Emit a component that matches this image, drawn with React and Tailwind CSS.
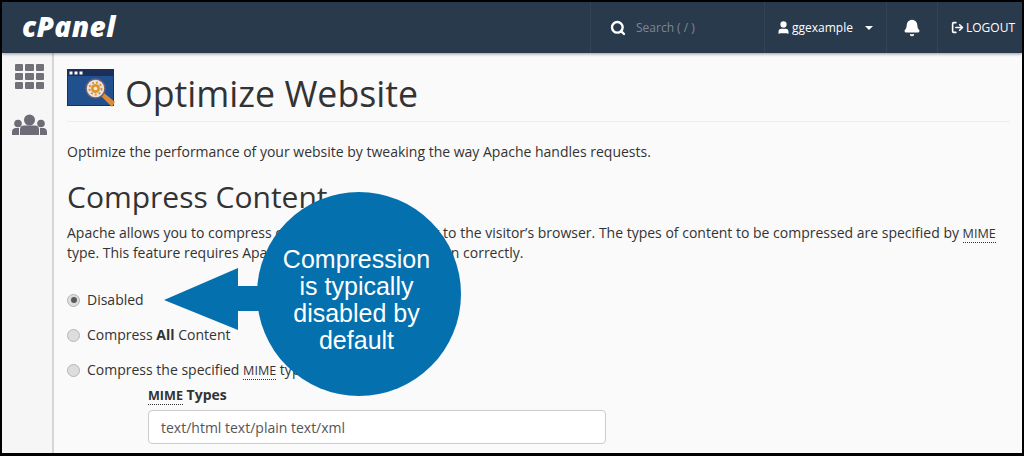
import { Search, User, Bell, LogOut } from "lucide-react";

function WindowIcon() {
  return (
    <svg width="48" height="38" viewBox="0 0 48 38">
      <rect x="0.5" y="0.5" width="46" height="36" fill="#21508f" stroke="#1c2f5a" />
      <rect x="0" y="0" width="47" height="7" fill="#1c2f5a" />
      <rect x="2.5" y="2.5" width="3" height="3" fill="#fff" />
      <rect x="7.5" y="2.5" width="3" height="3" fill="#fff" />
      <rect x="12.5" y="2.5" width="3" height="3" fill="#fff" />
      <path d="M34 27l3-3 11 9-3 5z" fill="#d98a3a" />
      <circle cx="28.500" cy="19.500" r="9.500" fill="#e8e4e2" stroke="#6c5f70" strokeWidth="1.500" />
      <circle cx="28.500" cy="19.500" r="4.500" fill="#e0952f" />
      <circle cx="28.500" cy="19.500" r="6" fill="none" stroke="#e0952f" strokeWidth="2" strokeDasharray="2 2" />
      <circle cx="28.500" cy="19.500" r="1.800" fill="#f4f0e8" />
    </svg>
  );
}

function GridIcon() {
  return (
    <div className="grid grid-cols-3 gap-[2px] w-[29px]">
      {[0, 1, 2, 3, 4, 5, 6, 7, 8].map((i) => (
        <div key={i} className="h-[7px] bg-[#72717a] rounded-[1px]" />
      ))}
    </div>
  );
}

function UsersIcon() {
  return (
    <svg width="36" height="22" viewBox="0 0 36 22" fill="#6d6c76">
      <circle cx="17.500" cy="6" r="5.500" />
      <circle cx="6" cy="9.500" r="3.800" />
      <circle cx="29" cy="9.500" r="3.800" />
      <path d="M8 21v-6c0-2.500 2-3.500 4-3.500h11c2 0 4 1 4 3.500v6z" />
      <path d="M0 21v-3c0-3 2-4 3.500-4H7v7zM35 21v-3c0-3-2-4-3.500-4H28v7z" />
    </svg>
  );
}

function Radio({ checked }) {
  return (
    <span className="w-[13px] h-[13px] rounded-full border border-[#b5b5b5] bg-[#dddddd] flex items-center justify-center shrink-0">
      {checked && <span className="w-[6px] h-[6px] rounded-full bg-[#5a5a5a]" />}
    </span>
  );
}

function Mime() {
  return <abbr className="no-underline text-[12.6px] leading-none border-b border-dotted border-[#333]">MIME</abbr>;
}

function App() {
  return (
    <div className="relative w-[1024px] h-[456px] overflow-hidden bg-black pl-[2px] pr-[2px] pt-[2px] pb-[3px] font-['Open_Sans',sans-serif] text-[#333]">
      <div className="h-full flex flex-col bg-[#fafafa] overflow-hidden">
        {/* Top bar */}
        <header className="h-[51px] shrink-0 bg-[#2a3a4d] flex items-center text-white shadow-[0_1px_3px_rgba(0,0,0,0.4)] z-10">
          <div className="pl-[20px] text-[28px] font-extrabold italic leading-none tracking-[0.4px] mb-[3px]">cPanel</div>
          <div className="ml-auto flex h-full items-center">
            <div className="w-[174px] h-full flex items-center pl-[19px] border-l border-dotted border-[#3d4c60]">
              <Search size={16} strokeWidth={3.5} />
              <span className="ml-[10px] text-[12px] text-[#7d8793]">Search ( / )</span>
            </div>
            <div className="w-[122px] h-full flex items-center pl-[11px] border-l border-dotted border-[#3d4c60]">
              <User size={15} fill="#fff" />
              <span className="ml-[1px] text-[12px]">ggexample</span>
              <span className="ml-[12px] w-0 h-0 border-x-[4px] border-x-transparent border-t-[4px] border-t-white" />
            </div>
            <div className="w-[51px] h-full flex items-center justify-center border-l border-dotted border-[#3d4c60]">
              <Bell size={18} fill="#fff" />
            </div>
            <div className="w-[85px] h-full flex items-center pl-[13px] border-l border-dotted border-[#3d4c60]">
              <LogOut size={13} strokeWidth={3} />
              <span className="text-[12px] ml-[2px]">LOGOUT</span>
            </div>
          </div>
        </header>

        <div className="flex flex-1 min-h-0">
          {/* Side rail */}
          <aside className="w-[52px] shrink-0 bg-[#f6f6f6] border-r-[2px] border-[#d6d6d6] flex flex-col items-center pl-[5px] pt-[11px] gap-[25px]">
            <GridIcon />
            <UsersIcon />
          </aside>

          {/* Content */}
          <main className="flex-1 min-w-0 pl-[13px] pr-[12px]">
            <div className="flex items-start h-[69px] pb-[6px] border-b border-[#eeeeee] gap-[10px]">
              <div className="mt-[16px]">
                <WindowIcon />
              </div>
              <h1 className="self-end text-[35.7px] leading-[44px] text-[#333]">Optimize Website</h1>
            </div>
            <p className="mt-[20px] text-[14px] leading-[20px]">
              Optimize the performance of your website by tweaking the way Apache handles requests.
            </p>
            <h2 className="mt-[17px] text-[30px] leading-[36px]">Compress Content</h2>
            <p className="mt-[8px] text-[14px] leading-[20px]">
              Apache allows you to compress content before sending it to the visitor’s browser. The types of content to be compressed are specified by <Mime />
              <br />
              type. This feature requires Apache’s mod_deflate to function correctly.
            </p>
            <div className="mt-[27px] flex flex-col gap-[15px] text-[14px] leading-[20px]">
              <label className="flex items-center gap-[7px]">
                <Radio checked />
                Disabled
              </label>
              <label className="flex items-center gap-[7px]">
                <Radio />
                <span>Compress <b>All</b> Content</span>
              </label>
              <label className="flex items-center gap-[7px]">
                <Radio />
                <span>Compress the specified <Mime /> types</span>
              </label>
            </div>
            <div className="ml-[81px] mt-[5px] w-[458px]">
              <div className="text-[14px] leading-[20px] font-bold"><Mime /> Types</div>
              <div className="mt-[5px] h-[34px] bg-white border border-[#ccc] rounded-[4px] px-[12px] flex items-center text-[14px] text-[#555]">
                text/html text/plain text/xml
              </div>
            </div>
          </main>
        </div>
      </div>

      {/* Callout */}
      <svg className="absolute left-[160px] top-[260px]" width="110" height="75" viewBox="0 0 110 75" fill="#0470ae">
        <path d="M4 40 L78 8 V26 H110 V51 H78 V70z" />
      </svg>
      <div className="absolute left-[257px] top-[192px] w-[204px] h-[204px] rounded-full bg-[#0470ae] flex items-center justify-center text-center text-white font-['Liberation_Sans',sans-serif] text-[25px] leading-[27px] pr-[5px] pt-[12px]">
        <div>
          Compression
          <br />
          is typically
          <br />
          disabled by
          <br />
          default
        </div>
      </div>
    </div>
  );
}

export default App;
